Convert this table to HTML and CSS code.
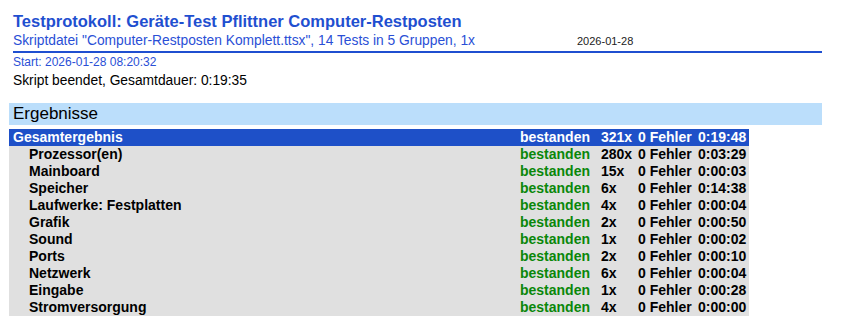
FILE: index.html
```html
<!DOCTYPE html>
<html lang="de">
  <head>
    <meta charset="UTF-8" />
    <title>Testprotokoll</title>
    <link rel="stylesheet" href="styles.css">
  </head>
  <body>
    <!-- Kopfbereich -->
    <div class="kopf">
      <h1 class="titel">Testprotokoll: Geräte-Test Pflittner Computer-Restposten</h1>
      <div class="unterzeile">
        <span class="skript">Skriptdatei "Computer-Restposten Komplett.ttsx", 14 Tests in 5 Gruppen, 1x</span>
        <span class="datum">2026-01-28</span>
      </div>
    </div>
    <p class="start">Start: 2026-01-28 08:20:32</p>
    <p class="dauer">Skript beendet, Gesamtdauer: 0:19:35</p>

    <h2 class="abschnitt">Ergebnisse</h2>

    <table class="ergebnis">
      <tr class="gesamt">
        <td class="name">Gesamtergebnis</td>
        <td class="status">bestanden</td>
        <td class="anzahl">321x</td>
        <td class="fehler">0 Fehler</td>
        <td class="zeit">0:19:48</td>
      </tr>
      <tr>
        <td class="name">Prozessor(en)</td>
        <td class="status">bestanden</td>
        <td class="anzahl">280x</td>
        <td class="fehler">0 Fehler</td>
        <td class="zeit">0:03:29</td>
      </tr>
      <tr>
        <td class="name">Mainboard</td>
        <td class="status">bestanden</td>
        <td class="anzahl">15x</td>
        <td class="fehler">0 Fehler</td>
        <td class="zeit">0:00:03</td>
      </tr>
      <tr>
        <td class="name">Speicher</td>
        <td class="status">bestanden</td>
        <td class="anzahl">6x</td>
        <td class="fehler">0 Fehler</td>
        <td class="zeit">0:14:38</td>
      </tr>
      <tr>
        <td class="name">Laufwerke: Festplatten</td>
        <td class="status">bestanden</td>
        <td class="anzahl">4x</td>
        <td class="fehler">0 Fehler</td>
        <td class="zeit">0:00:04</td>
      </tr>
      <tr>
        <td class="name">Grafik</td>
        <td class="status">bestanden</td>
        <td class="anzahl">2x</td>
        <td class="fehler">0 Fehler</td>
        <td class="zeit">0:00:50</td>
      </tr>
      <tr>
        <td class="name">Sound</td>
        <td class="status">bestanden</td>
        <td class="anzahl">1x</td>
        <td class="fehler">0 Fehler</td>
        <td class="zeit">0:00:02</td>
      </tr>
      <tr>
        <td class="name">Ports</td>
        <td class="status">bestanden</td>
        <td class="anzahl">2x</td>
        <td class="fehler">0 Fehler</td>
        <td class="zeit">0:00:10</td>
      </tr>
      <tr>
        <td class="name">Netzwerk</td>
        <td class="status">bestanden</td>
        <td class="anzahl">6x</td>
        <td class="fehler">0 Fehler</td>
        <td class="zeit">0:00:04</td>
      </tr>
      <tr>
        <td class="name">Eingabe</td>
        <td class="status">bestanden</td>
        <td class="anzahl">1x</td>
        <td class="fehler">0 Fehler</td>
        <td class="zeit">0:00:28</td>
      </tr>
      <tr>
        <td class="name">Stromversorgung</td>
        <td class="status">bestanden</td>
        <td class="anzahl">4x</td>
        <td class="fehler">0 Fehler</td>
        <td class="zeit">0:00:00</td>
      </tr>
    </table>
  </body>
</html>
```

FILE: styles.css
```css
body {
  font-family: "Liberation Sans", Arial, sans-serif;
  margin: 0;
  padding: 10px 23px 0 9px;
  color: #000;
  background: #fff;
}
.kopf {
  margin-left: 4px;
  padding-bottom: 1px;
  border-bottom: 2px solid #1f4fd0;
}
.titel {
  margin: 0;
  font-size: 16.5px;
  font-weight: bold;
  line-height: 22px;
  color: #1f4fd0;
}
.unterzeile {
  display: grid;
  grid-template-columns: 564px auto;
  align-items: baseline;
  line-height: 17px;
}
.skript {
  font-size: 13.8px;
  color: #2a4fd6;
}
.datum {
  font-size: 11px;
  color: #222;
}
.start {
  margin: 2px 0 0 4px;
  font-size: 12px;
  line-height: 14px;
  color: #2a4fd6;
}
.dauer {
  margin: 3px 0 0 4px;
  font-size: 13.8px;
  line-height: 18px;
}
.abschnitt {
  margin: 13px 0 0;
  padding: 0 4px;
  font-size: 17px;
  font-weight: normal;
  line-height: 22px;
  background: #bbdefb;
}
.ergebnis {
  margin-top: 4px;
  width: 740px;
  border-collapse: collapse;
  background: #e0e0e0;
  font-size: 14px;
  font-weight: bold;
}
.ergebnis td {
  padding: 0;
  height: 17px;
  line-height: 17px;
  white-space: nowrap;
}
.name {
  padding-left: 20px !important;
}
.status {
  width: 81px;
  color: #0a870a;
}
.anzahl {
  width: 37px;
}
.fehler {
  width: 60px;
}
.zeit {
  width: 51px;
}
.gesamt {
  background: #1e50c8;
  color: #fff;
}
.gesamt .name {
  padding-left: 4px !important;
}
.gesamt .status {
  color: #fff;
}
```
